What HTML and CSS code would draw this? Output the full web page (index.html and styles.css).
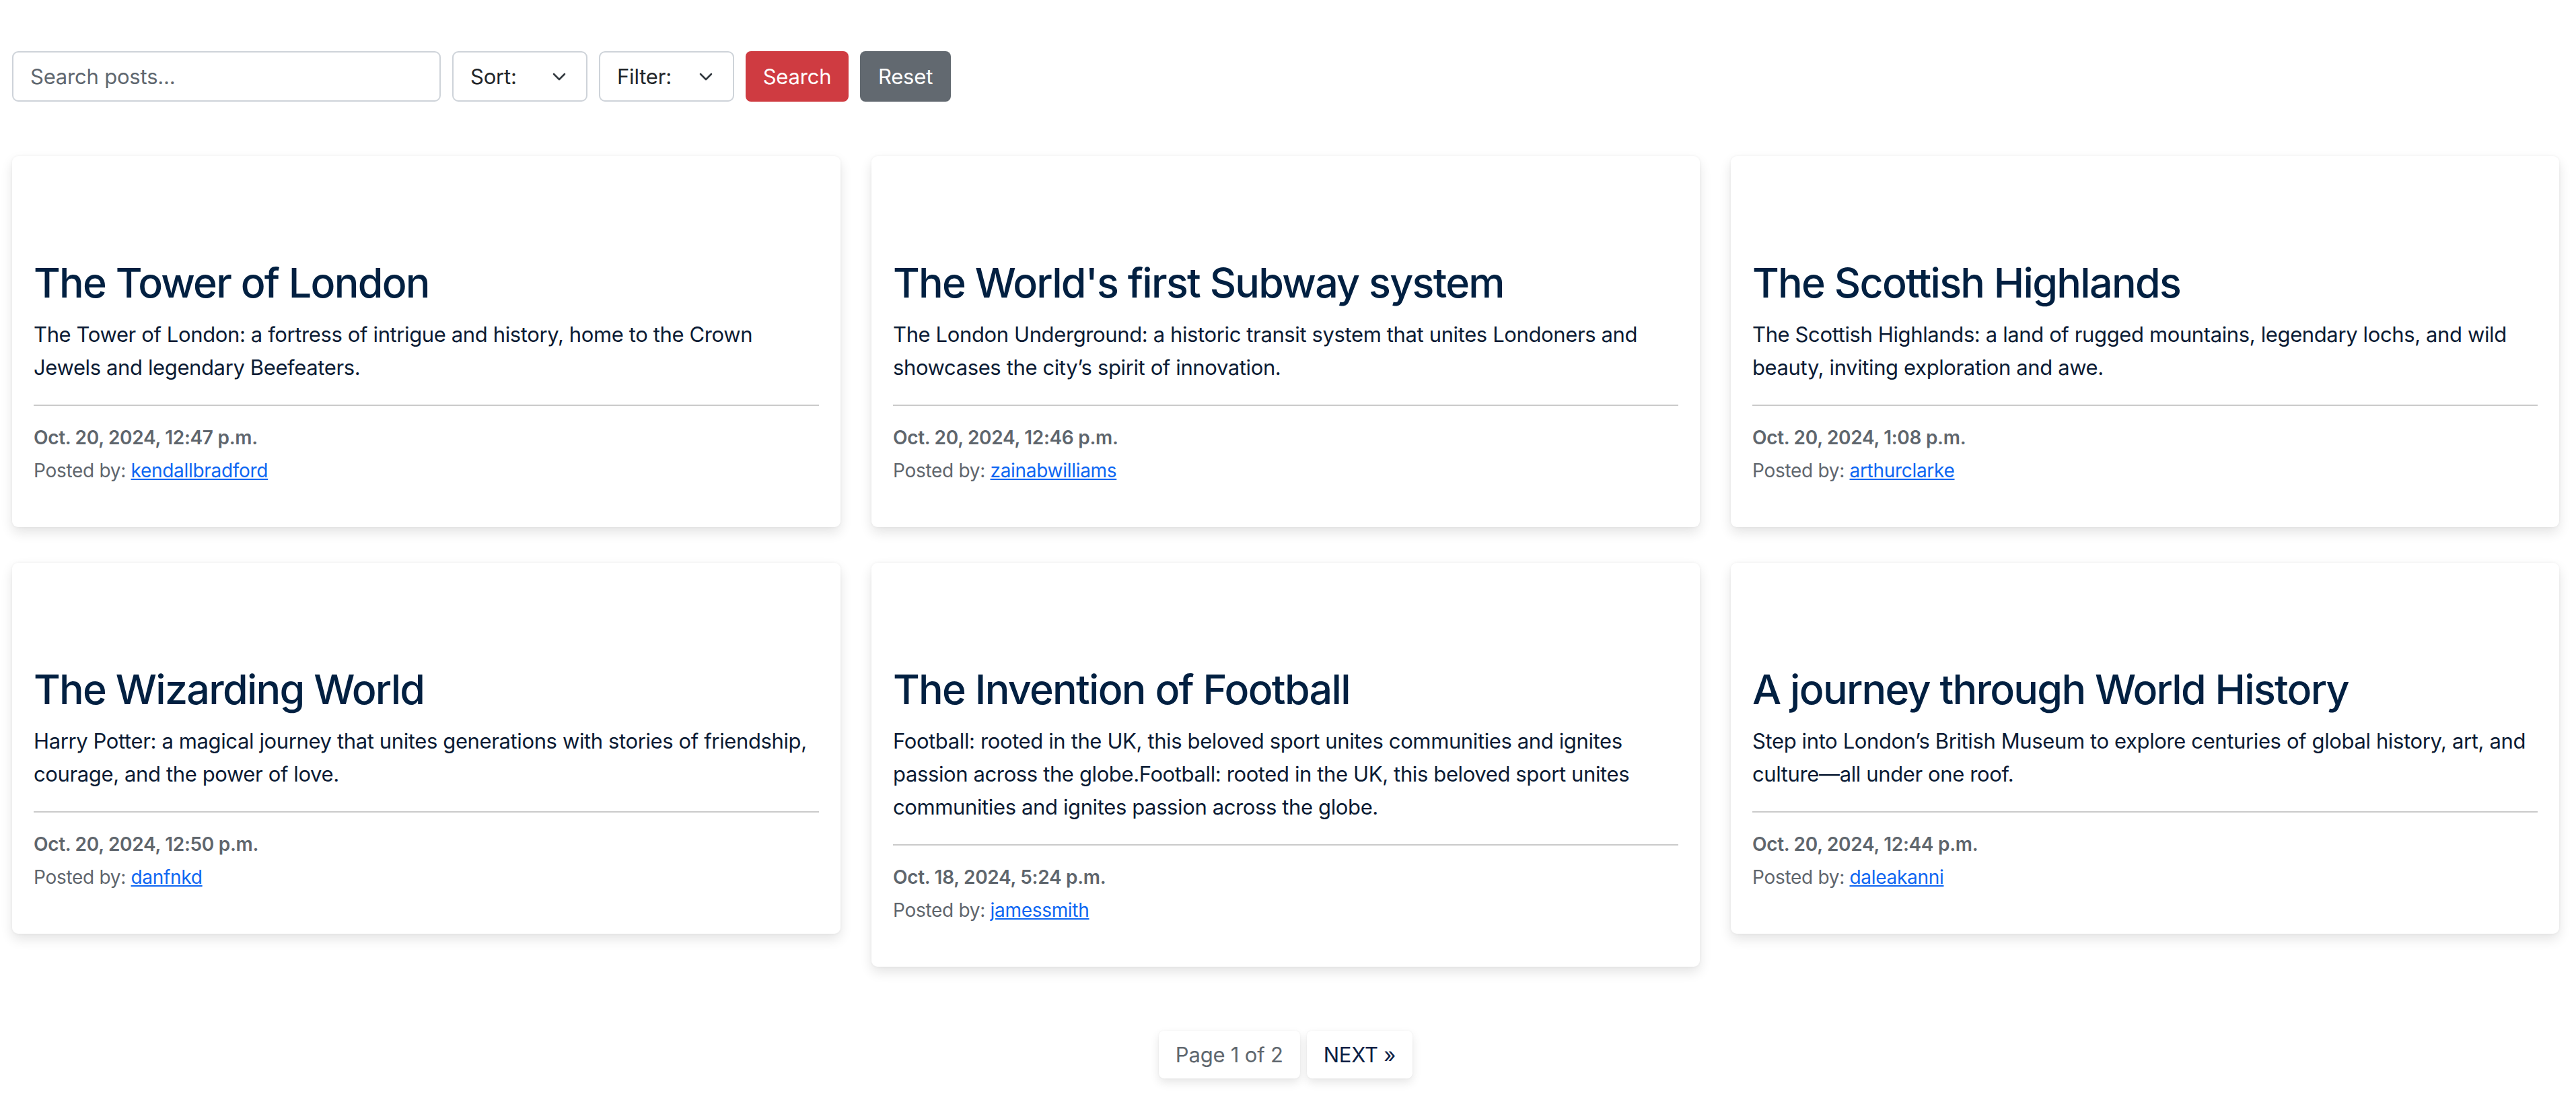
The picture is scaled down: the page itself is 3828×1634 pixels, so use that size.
FILE: index.html
```html
<!DOCTYPE html>
<html lang="en">
<head>
<meta charset="utf-8">
<title>Posts</title>
<link rel="stylesheet" href="styles.css">
</head>
<body>
<div class="page">
  <form class="toolbar">
    <input class="search-input" type="text" placeholder="Search posts...">
    <div class="select"><span>Sort:</span><svg class="chev" viewBox="0 0 20 12"><polyline points="2,2 10,10 18,2"/></svg></div>
    <div class="select"><span>Filter:</span><svg class="chev" viewBox="0 0 20 12"><polyline points="2,2 10,10 18,2"/></svg></div>
    <button type="button" class="btn btn-danger">Search</button>
    <button type="button" class="btn btn-secondary">Reset</button>
  </form>

  <div class="grid">
    <article class="card">
      <div class="card-media"></div>
      <div class="card-body">
        <h2 class="card-title">The Tower of London</h2>
        <p class="card-text">The Tower of London: a fortress of intrigue and history, home to the Crown Jewels and legendary Beefeaters.</p>
        <hr class="divider">
        <p class="meta-date">Oct. 20, 2024, 12:47 p.m.</p>
        <p class="meta-author">Posted by: <a href="#">kendallbradford</a></p>
      </div>
    </article>
    <article class="card">
      <div class="card-media"></div>
      <div class="card-body">
        <h2 class="card-title">The World's first Subway system</h2>
        <p class="card-text">The London Underground: a historic transit system that unites Londoners and showcases the city’s spirit of innovation.</p>
        <hr class="divider">
        <p class="meta-date">Oct. 20, 2024, 12:46 p.m.</p>
        <p class="meta-author">Posted by: <a href="#">zainabwilliams</a></p>
      </div>
    </article>
    <article class="card">
      <div class="card-media"></div>
      <div class="card-body">
        <h2 class="card-title">The Scottish Highlands</h2>
        <p class="card-text">The Scottish Highlands: a land of rugged mountains, legendary lochs, and wild beauty, inviting exploration and awe.</p>
        <hr class="divider">
        <p class="meta-date">Oct. 20, 2024, 1:08 p.m.</p>
        <p class="meta-author">Posted by: <a href="#">arthurclarke</a></p>
      </div>
    </article>
    <article class="card">
      <div class="card-media"></div>
      <div class="card-body">
        <h2 class="card-title">The Wizarding World</h2>
        <p class="card-text">Harry Potter: a magical journey that unites generations with stories of friendship, courage, and the power of love.</p>
        <hr class="divider">
        <p class="meta-date">Oct. 20, 2024, 12:50 p.m.</p>
        <p class="meta-author">Posted by: <a href="#">danfnkd</a></p>
      </div>
    </article>
    <article class="card">
      <div class="card-media"></div>
      <div class="card-body">
        <h2 class="card-title">The Invention of Football</h2>
        <p class="card-text">Football: rooted in the UK, this beloved sport unites communities and ignites passion across the globe.Football: rooted in the UK, this beloved sport unites communities and ignites passion across the globe.</p>
        <hr class="divider">
        <p class="meta-date">Oct. 18, 2024, 5:24 p.m.</p>
        <p class="meta-author">Posted by: <a href="#">jamessmith</a></p>
      </div>
    </article>
    <article class="card">
      <div class="card-media"></div>
      <div class="card-body">
        <h2 class="card-title">A journey through World History</h2>
        <p class="card-text">Step into London’s British Museum to explore centuries of global history, art, and culture—all under one roof.</p>
        <hr class="divider">
        <p class="meta-date">Oct. 20, 2024, 12:44 p.m.</p>
        <p class="meta-author">Posted by: <a href="#">daleakanni</a></p>
      </div>
    </article>
  </div>

  <nav class="pagination">
    <span class="page-item current">Page 1 of 2</span>
    <a class="page-item next" href="#">NEXT »</a>
  </nav>
</div>
</body>
</html>
```
FILE: styles.css
```css
* { box-sizing: border-box; }
html, body { margin: 0; padding: 0; background: #ffffff; }
body {
  font-family: Inter, "Noto Sans", "Liberation Sans", sans-serif;
  font-size: 31px;
  color: #0b1b34;
}
.page {
  padding: 76px 25px 40px 18px;
}
.toolbar {
  display: flex;
  gap: 17px;
  height: 75px;
}
.search-input {
  width: 637px;
  height: 75px;
  border: 2px solid #ced3d9;
  border-radius: 9px;
  padding: 0 25px;
  font-family: inherit;
  font-size: 31px;
  letter-spacing: -0.2px;
  color: #212529;
  outline: none;
}
.search-input::placeholder { color: #5f676f; }
.select {
  width: 201px;
  height: 75px;
  border: 2px solid #ced3d9;
  border-radius: 9px;
  padding: 0 30px 0 25px;
  display: flex;
  align-items: center;
  justify-content: space-between;
  font-size: 31px;
  letter-spacing: -0.2px;
  color: #212529;
}
.chev {
  width: 20px;
  height: 12px;
  fill: none;
  stroke: #343a40;
  stroke-width: 2.6;
  stroke-linecap: round;
  stroke-linejoin: round;
}
.btn {
  height: 75px;
  border: none;
  border-radius: 8px;
  padding: 0 20px;
  font-family: inherit;
  font-size: 31px;
  letter-spacing: -0.2px;
  color: #ffffff;
}
.btn-danger { background: #cf3b41; width: 153px; }
.btn-secondary { background: #626970; width: 135px; }

.grid {
  margin-top: 81px;
  display: grid;
  grid-template-columns: repeat(3, 1fr);
  column-gap: 46px;
  row-gap: 53px;
  align-items: start;
}
.card {
  background: #ffffff;
  border-radius: 9px;
  box-shadow: 0 8px 18px rgba(0, 0, 0, 0.11), 0 0 4px rgba(0, 0, 0, 0.05);
}
.card-media { height: 119px; }
.card-body { padding: 32px 32px 59px; }
.card-title {
  margin: 0;
  font-size: 61px;
  font-weight: 500;
  line-height: 74px;
  letter-spacing: -0.028em;
  color: #022041;
}
.card-text {
  margin: 15px 0 0;
  font-size: 31px;
  line-height: 49px;
  letter-spacing: -0.38px;
  color: #0b1b34;
}
.divider {
  margin: 31px 0 0;
  border: none;
  height: 2px;
  background: #cacaca;
}
.meta-date {
  margin: 23px 0 0;
  font-size: 28px;
  font-weight: 600;
  line-height: 49px;
  letter-spacing: -0.3px;
  color: #5f666d;
}
.meta-author {
  margin: 0;
  font-size: 28px;
  line-height: 49px;
  letter-spacing: -0.3px;
  color: #5f666d;
}
.meta-author a { color: #0d66f2; }

.pagination {
  margin-top: 95px;
  display: flex;
  justify-content: center;
  gap: 10px;
}
.page-item {
  height: 71px;
  padding: 0 25px;
  display: flex;
  align-items: center;
  background: #ffffff;
  border-radius: 8px;
  box-shadow: 0 6px 14px rgba(0, 0, 0, 0.10), 0 0 3px rgba(0, 0, 0, 0.05);
  font-size: 31px;
  letter-spacing: -0.2px;
  text-decoration: none;
}
.current { color: #5f676e; }
.next { color: #0b2044; }
```
